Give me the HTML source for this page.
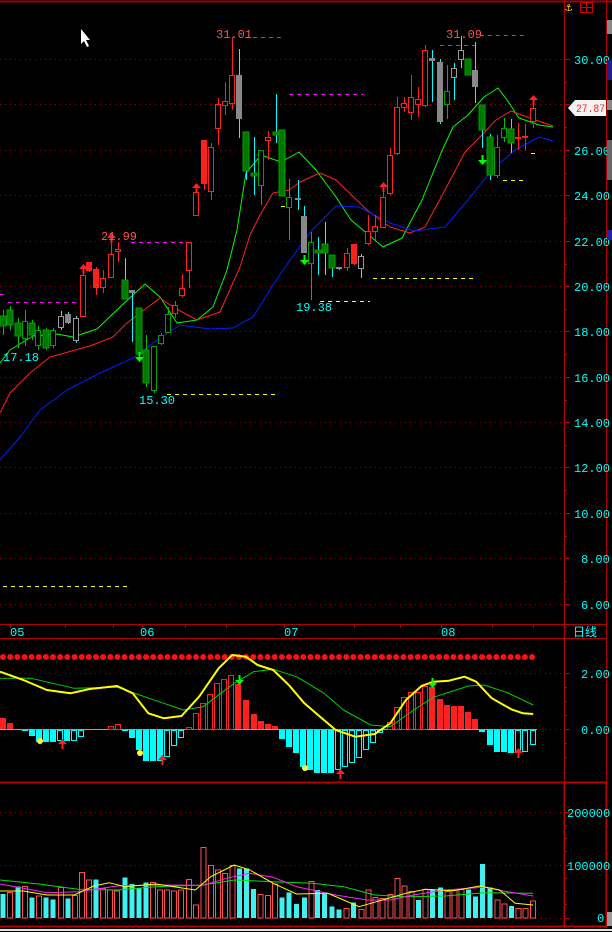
<!DOCTYPE html>
<html><head><meta charset="utf-8"><style>
html,body{margin:0;padding:0;background:#000;width:612px;height:932px;overflow:hidden}
svg{display:block}
text{font-family:"Liberation Mono","Noto Sans CJK SC",monospace;font-size:12px}
</style></head><body>
<svg id="s" width="612" height="932" viewBox="0 0 612 932" xmlns="http://www.w3.org/2000/svg">
<rect width="612" height="932" fill="#000"/>
<g id="g"></g>
</svg>
<script>
var o='';
function L(x1,y1,x2,y2,c,w,d){o+='<line x1="'+x1+'" y1="'+y1+'" x2="'+x2+'" y2="'+y2+'" stroke="'+c+'" stroke-width="'+(w||1)+'"'+(d?' stroke-dasharray="'+d+'"':'')+' shape-rendering="crispEdges"/>';}
function R(x,y,w,h,f,s){o+='<rect x="'+x+'" y="'+y+'" width="'+w+'" height="'+h+'" fill="'+f+'"'+(s?' stroke="'+s+'"':'')+' shape-rendering="crispEdges"/>';}
function T(x,y,t,c,a){o+='<text x="'+x+'" y="'+y+'" fill="'+c+'"'+(a?' text-anchor="'+a+'"':'')+'>'+t+'</text>';}
function P(pts,c,w){o+='<polyline fill="none" stroke="'+c+'" stroke-width="'+(w||1)+'" stroke-linejoin="round" points="'+pts.map(function(p){return p[0]+','+p[1]}).join(' ')+'"/>';}
function Z(pts){return pts.map(function(p){return [+(p[0]/2.562).toFixed(1),+(p[1]/3+610).toFixed(1)]});}
var RED='#ff2020',DR='#b00000',CY='#00ffff',GR='#00ff00';
L(0,1.5,612,1.5,'#a00000',2);
L(564.5,0,564.5,928,DR);
L(606.5,0,606.5,928,DR);
L(0,624.5,606,624.5,DR);L(0,638.5,606,638.5,DR);L(0,782.5,606,782.5,DR,2);
L(0,926.5,606,926.5,DR,2);L(0,930,612,930,'#e0e0e0',2);
R(564,782,42,144,'none','#c00000');
var ys=[59,104,150,195,241,286,331,377,422,467,513,558,604],ps=['30.00','28.00','26.00','24.00','22.00','20.00','18.00','16.00','14.00','12.00','10.00','8.00','6.00'];
for(var i=0;i<ys.length;i++){L(0,ys[i]+.5,564,ys[i]+.5,'#a00000',1,'1 4');L(564,ys[i]+.5,570,ys[i]+.5,DR);
 if(i!=1)T(ps[i].length>4?574:581,ys[i]+5,ps[i],CY);
 L(564,ys[i]+23.5,567,ys[i]+23.5,DR);}
o+='<polygon points="568,108 575,100 606,100 606,116 575,116" fill="#f4f4f4"/>';
o+='<text x="576" y="112" fill="'+RED+'" style="font-size:11px" textLength="29" lengthAdjust="spacingAndGlyphs">27.87</text>';
T(565,11,'⚓','#ffd800');R(580.5,2.5,12,10,'none','#d00000');L(580,7.5,592,7.5,'#d00000');L(586.5,2,586.5,12,'#d00000');
R(607,20,5,14,'#888');R(607,60,5,20,'#20208a');R(607,100,5,10,'#888');R(607,140,5,40,'#666');R(607,230,5,10,'#22a');R(607,912,5,14,'#999');
o+='<polygon points="81,29 81,44 84,41 87,47 89,46 86,40 90,40" fill="#fff"/>';
P([[0,363],[10,350],[33,336],[57,334],[73,337],[97,329],[120,307],[145,284],[160,297],[177,323],[197,320],[213,307],[227,270],[237,230],[246,173],[261,155],[281,162],[299,152],[316,170],[336,197],[351,220],[383,247],[402,238],[422,200],[441,153],[453,127],[468,115],[484,97],[498,88],[507,100],[519,118],[539,125],[553,127]],GR);
P([[0,413],[10,393],[30,373],[50,357],[90,346],[113,337],[127,323],[160,298],[173,307],[197,320],[220,312],[240,267],[250,235],[260,215],[273,193],[289,190],[300,182],[320,173],[336,180],[367,210],[390,227],[410,233],[425,227],[445,190],[465,152],[480,137],[496,120],[511,111],[527,117],[553,126]],RED);
P([[0,460],[20,437],[40,410],[67,390],[100,373],[133,358],[157,340],[180,325],[210,329],[233,328],[253,317],[273,285],[290,260],[312,230],[336,206],[359,207],[390,223],[414,231],[445,227],[468,200],[492,170],[515,150],[539,137],[553,141]],'#0020ff');
function D(x1,x2,y,c){L(x1,y+.5,x2,y+.5,c,1,'4 4');}
var MG='#ff00ff',YL='#ffff00';
D(8,77,302,MG);D(0,6,294,MG);D(131,184,242,MG);D(289,363,94,MG);D(245,285,37,MG);D(440,475,45,MG);D(480,527,35,MG);
D(167,277,394,YL);D(320,370,301,YL);D(373,477,278,YL);D(503,527,180,YL);D(3,127,586,YL);D(531,535,153,YL);D(281,289,206,YL);
var C=[[3,316,325,310,335,'g'],[10,310,324,306,330,'g'],[18,323,335,318,348,'g'],[25,321,338,310,346,'G'],[32,323,334,320,340,'g'],[38,330,345,326,350,'G'],[46,330,347,328,350,'g'],[53,330,345,328,348,'G'],[61,316,327,311,330,'C'],[68,314,322,312,324,'c'],[76,318,340,316,343,'C'],[83,275,316,268,317,'r'],[89,262,270,262,272,'R'],[96,269,287,267,295,'R'],[103,278,287,270,293,'r'],[111,254,277,242,278,'r'],[118,249,251,242,262,'r'],[125,280,298,258,298,'g'],[132,290,292,290,342,'c'],[139,308,353,308,358,'g'],[146,350,382,335,387,'g'],[154,346,390,346,393,'G'],[161,335,343,333,345,'G'],[168,314,332,307,333,'G'],[175,305,313,301,318,'r'],[182,288,295,274,297,'r'],[189,242,270,242,288,'r'],[196,192,215,190,216,'r'],[204,140,183,140,190,'R'],[211,147,191,143,200,'r'],[218,104,128,98,145,'r'],[225,101,105,82,115,'r'],[232,75,103,37,110,'r'],[239,75,118,49,138,'c'],[246,132,170,132,180,'g'],[254,173,175,137,195,'g'],[261,150,185,150,205,'G'],[268,137,140,131,160,'r'],[276,132,134,94,143,'g'],[282,130,195,130,196,'g'],[289,197,207,179,240,'G'],[298,198,199,180,210,'c'],[304,216,252,206,252,'c'],[311,242,263,232,300,'G'],[318,250,252,237,275,'g'],[325,244,252,222,275,'g'],[332,255,267,255,277,'g'],[339,267,268,267,270,'c'],[347,253,267,248,271,'r'],[354,244,263,244,265,'R'],[361,256,268,254,278,'C'],[368,231,243,215,245,'r'],[375,226,231,215,240,'r'],[383,197,227,190,228,'r'],[390,155,193,148,195,'r'],[397,107,153,97,155,'r'],[404,103,107,97,112,'r'],[411,97,112,75,120,'r'],[418,99,104,87,117,'r'],[425,50,105,45,107,'r'],[432,58,60,50,102,'c'],[440,62,121,59,124,'c'],[447,91,104,65,119,'G'],[454,68,77,63,100,'C'],[461,50,59,36,68,'C'],[468,59,74,59,74,'g'],[475,70,86,42,103,'c'],[482,105,129,105,148,'g'],[490,137,174,134,180,'g'],[497,147,175,135,178,'G'],[504,128,137,118,142,'G'],[511,129,142,119,153,'g'],[518,137,138,123,150,'r'],[525,136,137,124,150,'r'],[533,108,121,105,128,'r']];
C.forEach(function(c){var x=c[0],t=c[1],b=c[2],h=c[3],l=c[4],k=c[5];
 var wc=(k=='r'||k=='R')?RED:(k=='g'||k=='G'?'#00c000':CY);
 if(k=='c'||k=='C'||k=='g')wc=(k=='g'&&t>300)?'#00c000':CY;
 L(x+.5,h,x+.5,l,wc);
 var hh=Math.max(b-t,1);
 if(k=='r')R(x-2.5,t+.5,5,hh,'#000',RED);
 else if(k=='R')R(x-3,t,6,hh+1,RED);
 else if(k=='g')R(x-3,t,6,hh+1,'#007800','#00a000');
 else if(k=='G')R(x-2.5,t+.5,5,hh,'#000','#00a000');
 else if(k=='c')R(x-3,t,6,hh+1,'#888');
 else R(x-2.5,t+.5,5,hh,'#000','#999');
});
function UA(x,y,c){o+='<polygon points="'+(x-4)+','+(y+5)+' '+(x+.5)+','+y+' '+(x+5)+','+(y+5)+' '+(x+1.5)+','+(y+5)+' '+(x+1.5)+','+(y+10)+' '+(x-.5)+','+(y+10)+' '+(x-.5)+','+(y+5)+'" fill="'+c+'"/>';}
function DA(x,y,c){o+='<polygon points="'+(x-4)+','+(y+5)+' '+(x+.5)+','+(y+10)+' '+(x+5)+','+(y+5)+' '+(x+1.5)+','+(y+5)+' '+(x+1.5)+','+y+' '+(x-.5)+','+y+' '+(x-.5)+','+(y+5)+'" fill="'+c+'"/>';}
UA(83,264,RED);UA(111,233,RED);UA(196,183,RED);UA(383,182,RED);UA(533,95,RED);
DA(139,352,GR);DA(304,255,GR);DA(482,155,GR);
T(216,38,'31.01','#ff5050');T(446,38,'31.09','#ff5050');T(101,240,'21.99','#ff5050');
T(3,361,'17.18',CY);T(139,404,'15.30',CY);T(296,311,'19.38',CY);
[10,65,113,142,185,226,284,354,400,441,492,533].forEach(function(x){L(x+.5,624,x+.5,628,DR);});
T(10,636,'05',CY);T(140,636,'06',CY);T(284,636,'07',CY);T(441,636,'08',CY);
o+='<text x="573" y="636" fill="'+CY+'" style="font-family:\'Noto Sans CJK SC\',sans-serif;font-size:12px">日线</text>';
L(0,673.5,564,673.5,'#a00000',1,'1 4');L(0,729.5,564,729.5,'#a00000',1,'1 4');
T(581,678,'2.00',CY);T(581,734,'0.00',CY);
[673,729].forEach(function(y){L(564,y+.5,570,y+.5,DR);});[687,701,715,743,757].forEach(function(y){L(564,y+.5,567,y+.5,DR);});
for(var x=3;x<537;x+=7.15){o+='<circle cx="'+x.toFixed(1)+'" cy="657" r="3" fill="#ff1010"/>';}
L(0,729.5,537,729.5,'#a0a0a0');
var MB=[[3,718,'R'],[10,723,'R'],[111,726,'r'],[118,724,'r'],[25,731,'C'],[32,736,'C'],[39,742,'C'],[46,742,'C'],[53,742,'C'],[60,741,'c'],[67,741,'C'],[74,741,'c'],[81,737,'c'],[125,731,'C'],[132,738,'C'],[139,750,'C'],[146,761,'C'],[153,761,'C'],[160,761,'C'],[167,757,'c'],[174,746,'c'],[181,738,'c'],[189,727,'r'],[196,713,'r'],[203,703,'r'],[210,694,'r'],[217,683,'r'],[224,679,'r'],[231,675,'r'],[238,684,'R'],[246,700,'R'],[254,714,'R'],[261,721,'R'],[268,724,'R'],[275,726,'R'],[282,739,'C'],[289,747,'C'],[296,753,'C'],[303,767,'C'],[310,770,'C'],[317,773,'C'],[324,773,'C'],[331,773,'C'],[338,770,'c'],[345,767,'c'],[352,763,'c'],[359,758,'c'],[366,750,'c'],[373,743,'c'],[380,733,'c'],[390,722,'r'],[397,707,'r'],[404,697,'r'],[411,692,'r'],[418,692,'r'],[425,686,'r'],[432,687,'R'],[440,699,'R'],[447,705,'R'],[454,706,'R'],[461,706,'R'],[468,712,'R'],[475,719,'R'],[482,732,'C'],[490,745,'C'],[497,752,'C'],[504,752,'C'],[511,753,'C'],[518,753,'c'],[525,752,'c'],[533,745,'c']];
MB.forEach(function(b){var x=b[0],y=b[1],k=b[2];
 if(k=='R')R(x-3,y,6,729-y,RED);
 else if(k=='r')R(x-2.5,y+.5,5,729-y,'none',RED);
 else if(k=='C')R(x-3,730,6,y-730,CY);
 else R(x-2.5,730.5,5,y-731,'none',CY);});
P(Z([[0,205],[80,205],[190,235],[300,232],[420,280],[470,300],[520,290],[600,220],[650,185],[700,178],[760,200],[830,250],[880,300],[950,345],[1000,350],[1060,300],[1110,262],[1200,228],[1240,225],[1300,248],[1366,285]]),'#00d000');
P(Z([[0,185],[60,210],[120,240],[180,250],[230,237],[300,228],[340,250],[380,310],[420,325],[465,318],[510,260],[560,175],[595,135],[630,140],[660,165],[700,180],[740,225],[780,280],[820,320],[860,360],[910,380],[960,372],[1000,340],[1040,270],[1080,228],[1110,215],[1150,212],[1190,200],[1220,215],[1260,265],[1310,298],[1340,310],[1366,312]]),'#ffff00',2);
[[40,741],[140,753],[305,768]].forEach(function(p){o+='<circle cx="'+p[0]+'" cy="'+p[1]+'" r="3" fill="#ffff30"/>';});
UA(62,739,RED);UA(162,755,RED);UA(340,769,RED);UA(518,748,RED);DA(239,675,GR);DA(432,678,GR);
[812,865,918].forEach(function(y){L(0,y+.5,564,y+.5,'#a00000',1,'1 4');L(564,y+.5,570,y+.5,DR);});
[825,838,851,878,891,904].forEach(function(y){L(564,y+.5,567,y+.5,DR);});
T(567,817,'200000',CY);T(567,870,'100000',CY);T(597,922,'0',CY);
var V=[[8,852,'c'],[26,848,'r'],[46,830,'c'],[64,830,'r'],[82,862,'c'],[100,858,'r'],[118,862,'c'],[136,868,'c'],[156,833,'r'],[174,865,'c'],[192,857,'r'],[210,787,'r'],[228,810,'r'],[246,808,'c'],[264,835,'r'],[282,840,'r'],[300,843,'r'],[320,802,'c'],[338,822,'c'],[356,835,'c'],[374,818,'c'],[392,818,'r'],[410,840,'r'],[428,840,'r'],[446,843,'r'],[464,840,'r'],[484,808,'r'],[502,885,'r'],[522,712,'r'],[540,766,'r'],[558,780,'r'],[576,790,'r'],[596,766,'r'],[614,775,'c'],[632,775,'c'],[650,837,'c'],[668,853,'r'],[686,856,'r'],[704,822,'r'],[722,862,'c'],[740,848,'c'],[760,882,'c'],[780,862,'c'],[798,815,'r'],[814,840,'c'],[832,852,'c'],[850,890,'c'],[868,898,'c'],[888,895,'r'],[906,877,'c'],[926,898,'r'],[944,840,'r'],[962,862,'r'],[980,865,'r'],[1000,853,'r'],[1018,805,'r'],[1036,828,'r'],[1054,845,'r'],[1072,870,'c'],[1090,838,'r'],[1108,840,'c'],[1128,833,'c'],[1146,845,'r'],[1164,838,'r'],[1182,838,'r'],[1200,838,'c'],[1218,860,'c'],[1236,762,'c'],[1256,833,'c'],[1274,870,'r'],[1292,882,'r'],[1310,888,'c'],[1328,895,'r'],[1346,895,'r'],[1366,873,'r']];
V.forEach(function(v){var x=v[0]/2.562,y=v[1]/3+610;
 if(v[2]=='c')R((x-2.5).toFixed(1),y.toFixed(1),5,(918-y).toFixed(1),'#40f0f0');
 else R((x-2.5).toFixed(1),y.toFixed(1),5,(918-y).toFixed(1),'none','#ff5050');});
P(Z([[0,810],[100,822],[200,838],[300,840],[400,830],[520,825],[600,810],[700,815],[800,820],[880,830],[960,855],[1040,860],[1140,858],[1240,848],[1366,850]]),'#00e000');
P(Z([[0,822],[60,835],[120,848],[200,845],[300,828],[400,825],[520,826],[580,805],[640,790],[700,802],[760,830],[860,855],[940,870],[1000,870],[1060,855],[1140,840],[1240,832],[1300,845],[1366,858]]),'#ff20ff');
P(Z([[0,843],[60,843],[120,855],[190,855],[240,828],[280,818],[320,830],[400,822],[500,840],[540,800],[600,765],[640,780],[700,820],[760,852],[840,850],[880,870],[920,890],[980,870],[1040,850],[1090,838],[1160,842],[1230,828],[1280,840],[1320,880],[1366,885]]),'#ffff00');
document.getElementById('g').innerHTML=o;
</script>
</body></html>
